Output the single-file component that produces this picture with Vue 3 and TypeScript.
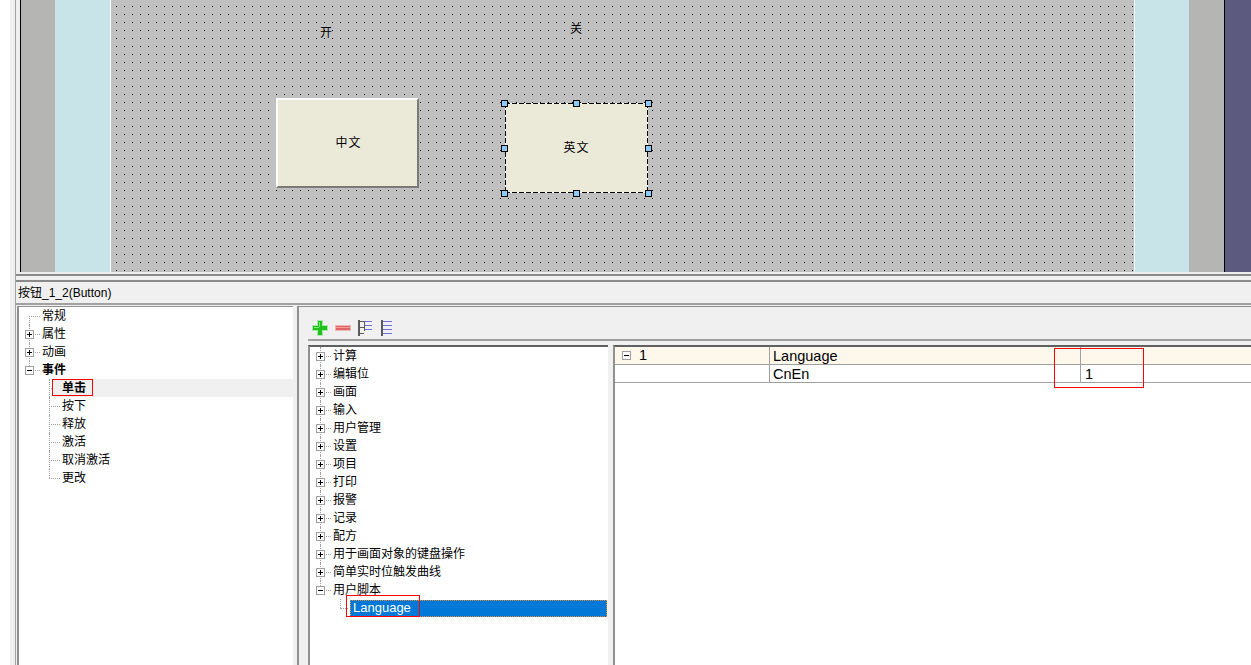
<script setup lang="ts">
interface TreeRow {
  label: string;
  level: number;
  mark?: "plus" | "minus";
  bold?: boolean;
  active?: boolean;
  selected?: boolean;
  first?: boolean;
  last?: boolean;
}

const propRows: TreeRow[] = [
  { label: "常规", level: 0, first: true },
  { label: "属性", level: 0, mark: "plus" },
  { label: "动画", level: 0, mark: "plus" },
  { label: "事件", level: 0, mark: "minus", bold: true, last: true },
  { label: "单击", level: 1, bold: true, active: true },
  { label: "按下", level: 1 },
  { label: "释放", level: 1 },
  { label: "激活", level: 1 },
  { label: "取消激活", level: 1 },
  { label: "更改", level: 1, last: true },
];

const funcNames = [
  "计算",
  "编辑位",
  "画面",
  "输入",
  "用户管理",
  "设置",
  "项目",
  "打印",
  "报警",
  "记录",
  "配方",
  "用于画面对象的键盘操作",
  "简单实时位触发曲线",
];

const funcRows: TreeRow[] = [
  ...funcNames.map((label): TreeRow => ({ label, level: 0, mark: "plus" })),
  { label: "用户脚本", level: 0, mark: "minus", last: true },
  { label: "Language", level: 1, selected: true, last: true },
];

const handles = ["h-tl", "h-tc", "h-tr", "h-ml", "h-mr", "h-bl", "h-bc", "h-br"];
</script>

<template>
  <div class="app">
    <div class="margin"></div>
    <div class="main">
      <div class="canvas-wrap">
        <div class="side gray"></div>
        <div class="side blue"></div>
        <div class="canvas">
          <span class="label on">开</span>
          <span class="label off">关</span>
          <div class="btn cn">中文</div>
          <div class="btn en">
            英文
            <i v-for="h in handles" :key="h" class="handle" :class="h"></i>
          </div>
        </div>
        <div class="side blue end"></div>
        <div class="side gray end"></div>
        <div class="side dark"></div>
      </div>
      <div class="splitter"></div>
      <div class="title">按钮_1_2(Button)</div>
      <div class="panels">
        <div class="prop-tree">
          <div
            v-for="row in propRows"
            :key="row.label"
            class="row"
            :class="[`level-${row.level}`, { active: row.active, bold: row.bold, last: row.last, first: row.first }]"
          >
            <span class="gutter">
              <span v-if="row.mark" class="box" :class="row.mark"></span>
            </span>
            <span class="text">{{ row.label }}</span>
            <span v-if="row.active" class="red-mark click-mark"></span>
          </div>
        </div>
        <div class="func-panel">
          <div class="toolbar">
            <svg width="16" height="16" viewBox="0 0 16 16">
              <path d="M5 0h6v5h5v6h-5v5H5v-5H0V5h5z" fill="#a8e8a8" />
              <path d="M6 1h4v5h5v4h-5v5H6v-5H1V6h5z" fill="#1fc21f" />
              <path d="M6 2h2v5H2v1h5V2z" fill="#7aea7a" />
            </svg>
            <svg width="16" height="16" viewBox="0 0 16 16">
              <rect x="0" y="5" width="16" height="6" fill="#f0b4b4" />
              <rect x="1" y="6" width="14" height="4" fill="#e06666" />
              <rect x="1" y="7" width="14" height="1" fill="#f09a9a" />
            </svg>
            <svg width="16" height="16" viewBox="0 0 16 16">
              <path d="M1 0v16" stroke="#5a5a5a" stroke-width="2" fill="none" />
              <path d="M2 1.5h4M2 7.5h4M2 13.5h4M6.5 1v10" stroke="#5a5a5a" stroke-width="1" fill="none" />
              <path d="M7 1.5h7M7 5.5h7M7 9.5h7" stroke="#7070e0" stroke-width="1" fill="none" />
            </svg>
            <svg width="16" height="16" viewBox="0 0 16 16">
              <path d="M1 0v16" stroke="#5a5a5a" stroke-width="2" fill="none" />
              <path d="M2 1.5h9M2 5.5h9M2 9.5h9M2 13.5h9" stroke="#7070e0" stroke-width="1" fill="none" />
            </svg>
          </div>
          <div class="func-body">
            <div class="func-tree">
              <div
                v-for="row in funcRows"
                :key="row.label"
                class="row"
                :class="[`level-${row.level}`, { selected: row.selected, last: row.last }]"
              >
                <span class="gutter">
                  <span v-if="row.mark" class="box" :class="row.mark"></span>
                </span>
                <span class="text">{{ row.label }}</span>
                <span v-if="row.selected" class="red-mark script-mark"></span>
              </div>
            </div>
            <div class="table">
              <div class="tr head">
                <div class="td c1"><span class="box minus"></span><span class="num">1</span></div>
                <div class="td c2">Language</div>
                <div class="td c3"></div>
              </div>
              <div class="tr">
                <div class="td c1"></div>
                <div class="td c2">CnEn</div>
                <div class="td c3">1</div>
              </div>
              <span class="red-mark table-mark"></span>
            </div>
          </div>
        </div>
      </div>
    </div>
  </div>
</template>

<style scoped>
.app {
  display: flex;
  width: 1251px;
  height: 665px;
  overflow: hidden;
  background: #fff;
  font-family: "Liberation Sans", "Noto Sans CJK SC", sans-serif;
  font-size: 12px;
  color: #000;
}
.margin {
  width: 5px;
  margin-left: 10px;
  background: #f0f0f0;
  flex: none;
}
.main {
  flex: 1;
  display: flex;
  flex-direction: column;
  min-width: 0;
  border-left: 1px solid #a0a0a0;
  background: #f0f0f0;
}
.canvas-wrap {
  display: flex;
  height: 272px;
  flex: none;
  padding-left: 4px;
}
.side {
  flex: none;
}
.side.gray {
  width: 34px;
  background: #b5b5b3;
  border-left: 1px solid #000;
}
.side.gray.end {
  width: 35px;
  border-left: 0;
}
.side.blue {
  width: 55px;
  background: #c8e4e8;
}
.side.blue.end {
  width: 54px;
}
.side.dark {
  flex: 1;
  background: #5c5a7e;
  border-left: 1px solid #000;
}
.canvas {
  position: relative;
  width: 1023px;
  flex: none;
  border-left: 1px solid #fff;
  border-right: 1px solid #fff;
  background-color: #c0c0c0;
  background-image: url("data:image/svg+xml,%3Csvg xmlns='http://www.w3.org/2000/svg' width='8' height='8'%3E%3Crect width='1' height='1' fill='%23000'/%3E%3C/svg%3E");
  background-size: 8px 8px;
  background-position: 5px 6px;
}
.label {
  position: absolute;
  font-size: 12px;
  line-height: 14px;
}
.label.on {
  left: 209px;
  top: 26px;
}
.label.off {
  left: 459px;
  top: 22px;
}
.btn {
  position: absolute;
  width: 143px;
  height: 90px;
  box-sizing: border-box;
  background: #ebe9d8;
  display: flex;
  align-items: center;
  justify-content: center;
  letter-spacing: 1px;
}
.btn.cn {
  left: 165px;
  top: 98px;
  border: 2px solid;
  border-color: #fff #7a7a7a #7a7a7a #fff;
  padding: 0 0 4px 2px;
}
.btn.en {
  left: 394px;
  top: 103px;
  padding-bottom: 4px;
  background:
    repeating-linear-gradient(90deg, #000 0 5px, #fff 5px 7px) 0 0 / 100% 1px no-repeat,
    repeating-linear-gradient(90deg, #000 0 5px, #fff 5px 7px) 0 100% / 100% 1px no-repeat,
    repeating-linear-gradient(180deg, #000 0 5px, #fff 5px 7px) 0 0 / 1px 100% no-repeat,
    repeating-linear-gradient(180deg, #000 0 5px, #fff 5px 7px) 100% 0 / 1px 100% no-repeat,
    #ebe9d8;
}
.handle {
  position: absolute;
  width: 5px;
  height: 5px;
  background: #8ccaf8;
  border: 1px solid #000;
  margin: -3px 0 0 -3px;
}
.h-tl,
.h-ml,
.h-bl {
  left: -1px;
}
.h-tc,
.h-bc {
  left: 71px;
}
.h-tr,
.h-mr,
.h-br {
  left: 143px;
}
.h-tl,
.h-tc,
.h-tr {
  top: 0;
}
.h-ml,
.h-mr {
  top: 45px;
}
.h-bl,
.h-bc,
.h-br {
  top: 90px;
}
.splitter {
  height: 4px;
  flex: none;
  margin-top: 2px;
  border-top: 2px solid #8a8a8a;
  border-bottom: 2px solid #8a8a8a;
}
.title {
  height: 21px;
  line-height: 23px;
  flex: none;
  padding-left: 2px;
  font-size: 12px;
  border-bottom: 2px solid #a0a0a0;
  margin-bottom: 1px;
}
.panels {
  flex: 1;
  display: flex;
  gap: 4px;
  min-height: 0;
  padding-left: 1px;
}
.prop-tree {
  width: 274px;
  flex: none;
  background: #fff;
  border-left: 2px solid #909090;
  border-top: 1px solid #909090;
}
.func-panel {
  flex: 1;
  min-width: 0;
  border-left: 2px solid #909090;
  border-top: 1px solid #909090;
  display: flex;
  flex-direction: column;
}
.toolbar {
  height: 34px;
  flex: none;
  margin-left: 9px;
  border-bottom: 2px solid #a0a0a0;
  display: flex;
  align-items: flex-start;
  gap: 7px;
  padding: 13px 0 0 4px;
  box-sizing: border-box;
}
.func-body {
  flex: 1;
  display: flex;
  min-height: 0;
  padding: 4px 0 0 9px;
}
.func-tree {
  width: 298px;
  flex: none;
  background: #fff;
  border-left: 2px solid #909090;
  border-top: 2px solid #606060;
}
.table {
  position: relative;
  flex: 1;
  min-width: 0;
  margin-left: 5px;
  background: #fff;
  border-left: 2px solid #909090;
  border-top: 2px solid #606060;
  font-size: 14.5px;
}
.row {
  position: relative;
  display: flex;
  align-items: center;
  height: 18px;
  line-height: 18px;
  white-space: nowrap;
}
.gutter {
  position: relative;
  flex: none;
  width: 23px;
  height: 18px;
}
.prop-tree .level-1 .gutter {
  width: 43px;
}
.func-tree .level-1 .gutter {
  width: 40px;
}
.gutter::before {
  content: "";
  position: absolute;
  left: 10px;
  top: 0;
  bottom: 0;
  border-left: 1px dotted #a0a0a0;
}
.gutter::after {
  content: "";
  position: absolute;
  left: 10px;
  right: 2px;
  top: 9px;
  border-top: 1px dotted #a0a0a0;
}
.prop-tree .first .gutter::before {
  top: 9px;
}
.row.last .gutter::before {
  bottom: 9px;
}
.level-1 .gutter::before,
.level-1 .gutter::after {
  left: 30px;
}
.box {
  display: block;
  width: 9px;
  height: 9px;
  box-sizing: border-box;
  border: 1px solid #a0a0a0;
  background: #fff;
  background-repeat: no-repeat;
  background-position: center;
  background-size: 5px 1px;
  background-image: linear-gradient(#000, #000);
}
.gutter .box {
  position: absolute;
  left: 6px;
  top: 5px;
  z-index: 1;
}
.box.plus {
  background-image: linear-gradient(#000, #000), linear-gradient(#000, #000);
  background-size: 5px 1px, 1px 5px;
}
.bold .text {
  font-weight: 700;
}
.row.active {
  background: #f0f0f0;
}
.row.active .gutter {
  background: #fff;
  width: 35px;
}
.row.active .text {
  margin-left: 8px;
}
.row.selected .text {
  flex: 1;
  height: 17px;
  line-height: 16px;
  margin-right: 1px;
  padding-left: 3px;
  background: #0078d7;
  color: #fff;
  font-size: 13px;
  outline: 1px dotted #e08a3c;
  outline-offset: -1px;
}
.red-mark {
  position: absolute;
  border: 1px solid #f00;
  box-sizing: border-box;
  pointer-events: none;
  z-index: 2;
}
.click-mark {
  left: 33px;
  top: 0;
  width: 41px;
  height: 17px;
}
.script-mark {
  left: 36px;
  top: -4px;
  width: 74px;
  height: 22px;
}
.table-mark {
  left: 439px;
  top: 1px;
  width: 90px;
  height: 40px;
}
.tr {
  display: flex;
  height: 18px;
  line-height: 19px;
  box-sizing: border-box;
  border-bottom: 1px solid #a0a0a0;
}
.tr.head {
  background: #fef8ec;
}
.td {
  box-sizing: border-box;
  padding-left: 3px;
  flex: none;
  white-space: nowrap;
}
.c1 {
  width: 155px;
  border-right: 1px solid #a0a0a0;
  display: flex;
  align-items: center;
  padding-left: 7px;
}
.c2 {
  width: 311px;
  border-right: 1px solid #a0a0a0;
}
.c3 {
  flex: 1;
  padding-left: 4px;
}
.num {
  margin-left: 8px;
}
</style>
